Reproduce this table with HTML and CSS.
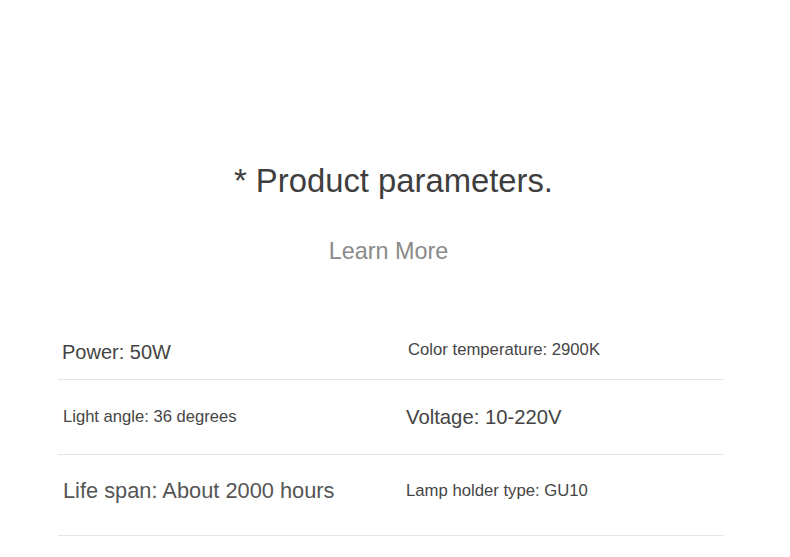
FILE: index.html
```html
<!DOCTYPE html>
<html>
<head>
<meta charset="utf-8">
<link rel="stylesheet" href="styles.css">
</head>
<body>
<div class="page">
  <section class="hero">
    <h1 class="title">* Product parameters.</h1>
    <a class="learn">Learn More</a>
  </section>
  <div class="specs">
    <div class="row r1">
      <div class="cell c-left"><span class="t20">Power: 50W</span></div>
      <div class="cell c-right"><span class="t167 ml2">Color temperature: 2900K</span></div>
    </div>
    <div class="row r2">
      <div class="cell c-left"><span class="t166 ml1">Light angle: 36 degrees</span></div>
      <div class="cell c-right"><span class="t203">Voltage: 10-220V</span></div>
    </div>
    <div class="row r3">
      <div class="cell c-left"><span class="t218 ml1">Life span: About 2000 hours</span></div>
      <div class="cell c-right"><span class="t167">Lamp holder type: GU10</span></div>
    </div>
  </div>
</div>
</body>
</html>
```
FILE: styles.css
```css
* { box-sizing: border-box; }
html, body { margin: 0; padding: 0; background: #fff; }
body { font-family: "Liberation Sans", Arial, sans-serif; color: #444; }
.page { width: 790px; height: 557px; overflow: hidden; }
.hero { height: 325px; display: flex; flex-direction: column; align-items: center; padding-top: 161px; }
.title { margin: 0; font-weight: normal; font-size: 32.8px; line-height: 40px; color: #3e3e3e; margin-left: -3px; }
.learn { margin-top: 37px; font-size: 23.4px; line-height: 26px; color: #8a8a8a; margin-left: -13px; }
.specs { margin: 0 66px 0 58px; }
.row { display: grid; grid-template-columns: 346px 1fr; border-bottom: 1px solid #e6e6e6; }
.r1 { height: 55px; }
.r2 { height: 75px; }
.r3 { height: 81px; padding-bottom: 8px; }
.cell { display: flex; align-items: center; }
.c-left { padding-left: 4px; }
.c-right { padding-left: 2px; }
.ml1 { margin-left: 1px; }
.ml2 { margin-left: 2px; margin-top: -4px; }
.t167 { font-size: 16.7px; color: #454545; }
.t166 { font-size: 16.6px; color: #454545; }
.t20 { font-size: 20px; color: #444; }
.t203 { font-size: 20.3px; color: #444; }
.t218 { font-size: 21.8px; color: #555; }
```
